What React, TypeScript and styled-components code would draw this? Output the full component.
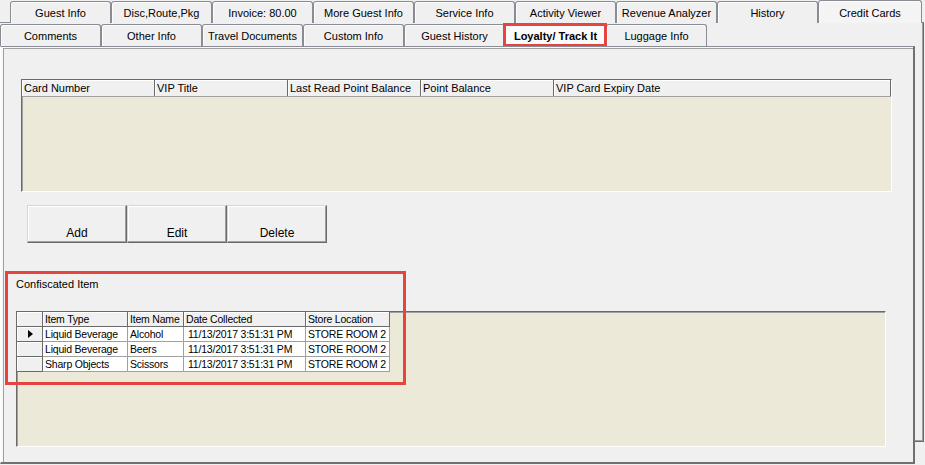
import styled, { createGlobalStyle } from "styled-components";

const GlobalStyle = createGlobalStyle`
  html, body {
    margin: 0;
    padding: 0;
    background: #f0f0f0;
  }
  body {
    font-family: "Liberation Sans", Arial, sans-serif;
    font-size: 11px;
    color: #000;
  }
`;

const Window = styled.div`
  position: relative;
  width: 925px;
  height: 465px;
  overflow: hidden;
  background: #f0f0f0;
`;

// the tab page behind, belonging to the upper tab row
const BackSheet = styled.div`
  position: absolute;
  left: 0;
  top: 22px;
  width: 924px;
  height: 420px;
  box-sizing: border-box;
  border-top: 1px solid #898c95;
  border-right: 1px solid #6a6a6a;
  border-bottom: 1px solid #6a6a6a;
  box-shadow: inset -1px -1px 0 #a0a0a0;
  background: #f0f0f0;
`;

const TabRow = styled.div<{ $indent: number }>`
  position: relative;
  z-index: 1;
  display: flex;
  align-items: flex-end;
  height: 23px;
  padding-left: ${(p) => p.$indent}px;
`;

const Tab = styled.div<{ $width?: number; $raised?: boolean; $selected?: boolean }>`
  position: relative;
  box-sizing: border-box;
  flex: none;
  width: ${(p) => p.$width ?? 101}px;
  height: ${(p) => (p.$selected ? 24 : p.$raised ? 23 : 22)}px;
  margin-bottom: ${(p) => (p.$selected ? -1 : 0)}px;
  padding-top: 1px;
  border: 1px solid #898c95;
  border-bottom: none;
  border-radius: 3px 3px 0 0;
  background: ${(p) => (p.$selected ? "#fafafa" : p.$raised ? "#f4f4f4" : "#f0f0f0")};
  box-shadow: inset 1px 1px 0 #fcfcfc;
  display: flex;
  align-items: center;
  justify-content: center;
  white-space: nowrap;
  font-weight: ${(p) => (p.$selected ? 700 : 400)};
  z-index: ${(p) => (p.$selected ? 2 : 1)};

  ${(p) =>
    p.$selected &&
    `
    &::after {
      content: "";
      position: absolute;
      left: -3px;
      right: -2px;
      top: -1px;
      bottom: 0;
      border: 3px solid #e6453f;
    }
  `}
`;

const Sheet = styled.div`
  position: relative;
  z-index: 1;
  box-sizing: border-box;
  width: 915px;
  height: 418px;
  border-top: 1px solid #898c95;
  border-left: 1px solid #ffffff;
  border-right: 2px solid #707070;
  border-bottom: 2px solid #707070;
  background: #f0f0f0;
  box-shadow: inset 2px 1px 0 #f8f8f8, inset 3px 2px 0 #a0a0a0;
  display: flex;
  flex-direction: column;
  align-items: flex-start;
`;

const Grid = styled.div<{ $width: number; $height: number; $left: number; $top: number }>`
  box-sizing: border-box;
  flex: none;
  width: ${(p) => p.$width}px;
  height: ${(p) => p.$height}px;
  margin: ${(p) => p.$top}px 0 0 ${(p) => p.$left}px;
  border-top: 1px solid #6a6a6a;
  border-left: 1px solid #6a6a6a;
  border-right: 1px solid #ffffff;
  border-bottom: 1px solid #ffffff;
  box-shadow: inset 1px 1px 0 #a0a0a0;
  background: #ece9d8;
`;

const HeaderRow = styled.div`
  display: flex;
  height: 16px;
  background: #f0f0f0;
  border-bottom: 1px solid #a0a0a0;
`;

const HeaderCell = styled.div<{ $width?: number }>`
  box-sizing: border-box;
  ${(p) => (p.$width ? `width: ${p.$width}px; flex: none;` : "flex: 1;")}
  padding-left: 2px;
  line-height: 16px;
  border-right: 1px solid #6a6a6a;
  box-shadow: inset 1px 1px 0 #ffffff;
  white-space: nowrap;
  overflow: hidden;
`;

const ButtonRow = styled.div`
  display: flex;
  margin: 13px 0 0 26px;
`;

const FlatButton = styled.button`
  box-sizing: border-box;
  width: 100px;
  height: 38px;
  margin: 0;
  padding: 0 0 2px;
  border: 1px solid;
  border-color: #d6d6d6 #6a6a6a #6a6a6a #d6d6d6;
  box-shadow: inset -1px -1px 0 #a0a0a0, inset 1px 1px 0 #ffffff;
  background: #f0f0f0;
  font-family: "Liberation Sans", Arial, sans-serif;
  font-size: 12px;
  color: #000;
  display: flex;
  align-items: flex-end;
  justify-content: center;
`;

const SectionLabel = styled.div`
  margin: 35px 0 0 15px;
  line-height: 13px;
`;

const ItemTable = styled.div`
  display: grid;
  grid-template-columns: 26px 85px 56px 122px 84px;
  grid-auto-rows: 15px;
  width: max-content;
  font-size: 10.5px;
  letter-spacing: -0.2px;
`;

const Cell = styled.div<{ $head?: boolean; $pad?: number }>`
  box-sizing: border-box;
  padding-left: ${(p) => p.$pad ?? 2}px;
  line-height: 14px;
  white-space: nowrap;
  overflow: hidden;
  background: ${(p) => (p.$head ? "#f0f0f0" : "#ffffff")};
  border-right: 1px solid ${(p) => (p.$head ? "#6a6a6a" : "#a0a0a0")};
  border-bottom: 1px solid ${(p) => (p.$head ? "#6a6a6a" : "#a0a0a0")};
  box-shadow: ${(p) => (p.$head ? "inset 1px 1px 0 #ffffff" : "none")};
`;

const RowHeader = styled(Cell)`
  display: flex;
  align-items: center;
  padding-left: 11px;
`;

const Pointer = styled.span`
  width: 0;
  height: 0;
  border-left: 5px solid #000;
  border-top: 4px solid transparent;
  border-bottom: 4px solid transparent;
`;

const Callout = styled.div`
  position: absolute;
  left: 4px;
  top: 224px;
  width: 401px;
  height: 114px;
  box-sizing: border-box;
  border: 3px solid #e6453f;
  pointer-events: none;
`;

const backTabs = [
  "Guest Info",
  "Disc,Route,Pkg",
  "Invoice: 80.00",
  "More Guest Info",
  "Service Info",
  "Activity Viewer",
  "Revenue Analyzer",
  "History",
];

const frontTabs = [
  "Comments",
  "Other Info",
  "Travel Documents",
  "Custom Info",
  "Guest History",
  "Loyalty/ Track It",
  "Luggage Info",
];

const cardColumns = ["Card Number", "VIP Title", "Last Read Point Balance", "Point Balance"];

const items = [
  { type: "Liquid Beverage", name: "Alcohol", date: "11/13/2017 3:51:31 PM", store: "STORE ROOM 2" },
  { type: "Liquid Beverage", name: "Beers", date: "11/13/2017 3:51:31 PM", store: "STORE ROOM 2" },
  { type: "Sharp Objects", name: "Scissors", date: "11/13/2017 3:51:31 PM", store: "STORE ROOM 2" },
];

export default function App() {
  return (
    <>
      <GlobalStyle />
      <Window>
        <BackSheet />

        <TabRow $indent={10}>
          {backTabs.map((t) => (
            <Tab key={t}>{t}</Tab>
          ))}
          <Tab $width={104} $raised>
            Credit Cards
          </Tab>
        </TabRow>

        <TabRow $indent={0}>
          {frontTabs.map((t) => (
            <Tab key={t} $selected={t === "Loyalty/ Track It"}>
              {t}
            </Tab>
          ))}
        </TabRow>

        <Sheet>
          <Grid $width={871} $height={113} $left={20} $top={32}>
            <HeaderRow>
              {cardColumns.map((c) => (
                <HeaderCell key={c} $width={133}>
                  {c}
                </HeaderCell>
              ))}
              <HeaderCell>VIP Card Expiry Date</HeaderCell>
            </HeaderRow>
          </Grid>

          <ButtonRow>
            <FlatButton>Add</FlatButton>
            <FlatButton>Edit</FlatButton>
            <FlatButton>Delete</FlatButton>
          </ButtonRow>

          <SectionLabel>Confiscated Item</SectionLabel>

          <Grid $width={870} $height={136} $left={15} $top={20}>
            <ItemTable>
              <Cell $head />
              <Cell $head>Item Type</Cell>
              <Cell $head>Item Name</Cell>
              <Cell $head>Date Collected</Cell>
              <Cell $head>Store Location</Cell>
              {items.map((it, i) => [
                <RowHeader $head key={`h${i}`}>
                  {i === 0 && <Pointer />}
                </RowHeader>,
                <Cell key={`t${i}`}>{it.type}</Cell>,
                <Cell key={`n${i}`}>{it.name}</Cell>,
                <Cell key={`d${i}`} $pad={4}>
                  {it.date}
                </Cell>,
                <Cell key={`s${i}`}>{it.store}</Cell>,
              ])}
            </ItemTable>
          </Grid>

          <Callout />
        </Sheet>
      </Window>
    </>
  );
}
